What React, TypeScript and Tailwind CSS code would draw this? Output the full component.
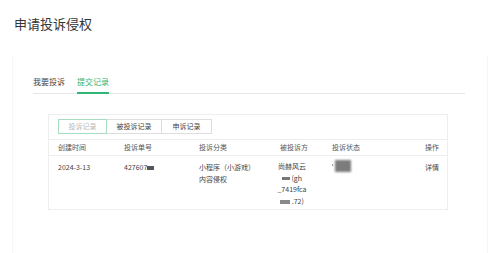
import React from 'react'

const font = { fontFamily: '"Noto Sans CJK SC", "Noto Sans", sans-serif' }

function Blur({ w, h, c = 'bg-[#8a8a8a]' }: { w: string; h: string; c?: string }) {
  return <span className={`inline-block align-middle ${w} ${h} ${c} blur-[0.4px]`} />
}

export default function App() {
  return (
    <div className="w-[500px] h-[253px] bg-white overflow-hidden text-[#333]" style={font}>
      <div className="pt-[14px] pl-[14px] h-[55px] text-[13px] leading-[20px] text-[#353535]">申请投诉侵权</div>

      <div className="mx-[12px] h-[198px] border-x border-[#f6f6f6] pl-[20px] pr-[22px]">
        {/* tabs */}
        <div className="pt-[21px] flex gap-[12px] border-b border-[#e6e6e6] text-[8px] leading-[12px]">
          <div className="pb-[5px] text-[#444]">我要投诉</div>
          <div className="pb-[3px] text-[#2fb574] border-b-2 border-[#2fb574] -mb-[1px]">提交记录</div>
        </div>

        {/* card */}
        <div className="ml-[15px] mt-[20px] w-[400px] h-[96px] border border-[#eeeeee]">
          <div className="pl-[9px] pt-[4px] flex text-[7px] leading-[13px]">
            <div className="w-[49px] h-[15px] border border-[#a6dcc0] text-[#b8b8b8] flex items-center justify-center">投诉记录</div>
            <div className="w-[55px] h-[15px] border-y border-r border-[#dedede] text-[#444] flex items-center justify-center">被投诉记录</div>
            <div className="w-[50px] h-[15px] border-y border-r border-[#dedede] text-[#444] flex items-center justify-center">申诉记录</div>
          </div>

          <div className="mt-[5px] h-[17px] border-y border-[#eeeeee] flex items-center text-[7px] text-[#555] pl-[9px]">
            <div className="w-[66px]">创建时间</div>
            <div className="w-[75px]">投诉单号</div>
            <div className="w-[81px]">投诉分类</div>
            <div className="w-[52px]">被投诉方</div>
            <div className="w-[93px]">投诉状态</div>
            <div>操作</div>
          </div>

          <div className="flex pl-[9px] pt-[5px] text-[7px] leading-[12px] text-[#444]">
            <div className="w-[66px]">2024-3-13</div>
            <div className="w-[75px]">427607<Blur w="w-[7px]" h="h-[4px]" c="bg-[#555]" /></div>
            <div className="w-[81px]">
              <div>小程序（小游戏）</div>
              <div>内容侵权</div>
            </div>
            <div className="w-[52px]">
              <div className="w-[36px] -ml-[6px] text-center leading-[11.5px]">
                <div>尚赫风云</div>
                <div><Blur w="w-[8px]" h="h-[3px]" c="bg-[#777]" /> (gh</div>
                <div>_7419fca</div>
                <div><Blur w="w-[10px]" h="h-[4px]" c="bg-[#8a8a8a]" /> .72)</div>
              </div>
            </div>
            <div className="w-[93px] flex items-start">
              <span className="inline-block w-[1px] h-[2px] bg-[#999] mt-[3px] mr-[2px]" />
              <span className="inline-block w-[16px] h-[12px] bg-[#7c7c7c] blur-[0.8px] -mt-[1px]" />
            </div>
            <div>详情</div>
          </div>
        </div>
      </div>
    </div>
  )
}
